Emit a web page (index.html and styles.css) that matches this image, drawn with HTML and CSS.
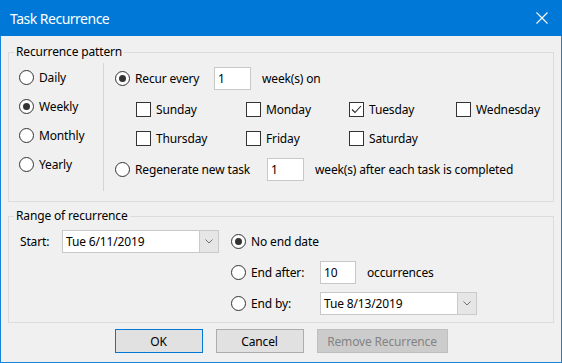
FILE: index.html
```html
<!DOCTYPE html>
<html lang="en">
<head>
    <meta charset="UTF-8">
    <meta name="viewport" content="width=device-width, initial-scale=1.0">
    <title>Task Recurrence</title>
    <link rel="stylesheet" href="styles.css">
</head>
<body>

<div class="window">
    <div class="titlebar">
        <span class="title">Task Recurrence</span>
        <svg class="close" width="12" height="12" viewBox="0 0 12 12"><path d="M0.5 0.5 L11.5 11.5 M11.5 0.5 L0.5 11.5" stroke="#fff" stroke-width="1.1" fill="none"/></svg>
    </div>

    <div class="dialog">
        <!-- pattern: frequency on the left, details on the right -->
        <fieldset class="group pattern">
            <legend>Recurrence pattern</legend>
            <div class="freq">
                <div class="opt"><span class="radio"></span>Daily</div>
                <div class="opt"><span class="radio on"></span>Weekly</div>
                <div class="opt"><span class="radio"></span>Monthly</div>
                <div class="opt"><span class="radio"></span>Yearly</div>
            </div>
            <div class="sep"></div>
            <div class="detail">
                <div class="recur-row">
                    <div class="opt lead"><span class="radio on"></span>Recur every</div>
                    <span class="field num">1</span>
                    <span class="after">week(s) on</span>
                </div>
                <div class="days">
                    <div class="opt"><span class="check"></span>Sunday</div>
                    <div class="opt"><span class="check"></span>Monday</div>
                    <div class="opt"><span class="check on"><svg width="13" height="13" viewBox="0 0 13 13"><path d="M2 6.5 L5 9.5 L11 3" stroke="#222" stroke-width="1.1" fill="none"/></svg></span>Tuesday</div>
                    <div class="opt"><span class="check"></span>Wednesday</div>
                    <div class="opt"><span class="check"></span>Thursday</div>
                    <div class="opt"><span class="check"></span>Friday</div>
                    <div class="opt"><span class="check"></span>Saturday</div>
                </div>
                <div class="regen-row">
                    <div class="opt lead"><span class="radio"></span>Regenerate new task</div>
                    <span class="field num">1</span>
                    <span class="after">week(s) after each task is completed</span>
                </div>
            </div>
        </fieldset>

        <!-- range: start date and how it ends -->
        <fieldset class="group range">
            <legend>Range of recurrence</legend>
            <div class="range-grid">
                <span class="start-label">Start:</span>
                <div class="combo">
                    <span class="combo-text">Tue 6/11/2019</span>
                    <span class="combo-btn"><svg width="8" height="5" viewBox="0 0 8 5"><path d="M0.5 0.5 L4 4 L7.5 0.5" stroke="#707070" stroke-width="1" fill="none"/></svg></span>
                </div>
                <div class="opt span2"><span class="radio on"></span>No end date</div>

                <span></span><span></span>
                <div class="opt"><span class="radio"></span>End after:</div>
                <div class="end-after">
                    <span class="field num">10</span>
                    <span class="after">occurrences</span>
                </div>

                <span></span><span></span>
                <div class="opt"><span class="radio"></span>End by:</div>
                <div class="combo">
                    <span class="combo-text">Tue 8/13/2019</span>
                    <span class="combo-btn"><svg width="8" height="5" viewBox="0 0 8 5"><path d="M0.5 0.5 L4 4 L7.5 0.5" stroke="#707070" stroke-width="1" fill="none"/></svg></span>
                </div>
            </div>
        </fieldset>

        <div class="buttons">
            <button class="btn default">OK</button>
            <button class="btn">Cancel</button>
            <button class="btn wide" disabled>Remove Recurrence</button>
        </div>
    </div>
</div>

</body>
</html>
```

FILE: styles.css
```css
body { margin: 0; font-family: "Noto Sans", "Open Sans", sans-serif; font-size: 12px; letter-spacing: -0.15px; color: #000; background: #f0f0f0; }
.window { width: 562px; height: 363px; display: flex; flex-direction: column; }
.titlebar { height: 36px; flex: none; background: #0078d7; color: #fff; display: flex; align-items: center; justify-content: space-between; padding: 0 14px 0 10px; }
.title { font-size: 14px; letter-spacing: -0.5px; }
.close { display: block; }
.dialog { flex: 1; border: 1px solid #1883d7; border-top: none; background: #f0f0f0; padding: 8px 7px 0 7px; }

/* group boxes */
.group { margin: 0; padding: 0; border: 1px solid #dcdcdc; box-sizing: border-box; display: flex; }
.group legend { margin-left: 5px; padding: 0 2px; line-height: 16px; }
.pattern { height: 158px; }
.range { height: 115px; margin-top: 6px; display: block; }

/* radio / checkbox rows */
.opt { display: flex; align-items: center; white-space: nowrap; }
.radio { width: 15px; height: 15px; box-sizing: border-box; border: 1px solid #333; border-radius: 50%; background: #fff; margin-right: 5px; display: flex; align-items: center; justify-content: center; flex: none; }
.radio.on::after { content: ""; width: 7px; height: 7px; border-radius: 50%; background: #333; }
.check { width: 15px; height: 15px; box-sizing: border-box; border: 1px solid #333; background: #fff; margin-right: 5px; display: flex; align-items: center; justify-content: center; flex: none; }
.check svg { display: block; }

.freq { width: 84px; padding: 3px 0 0 10px; }
.freq .opt { height: 29px; }
.sep { width: 1px; height: 128px; margin-top: 3px; background: #d5d5d5; }
.detail { padding: 3px 0 0 11px; }
.recur-row { height: 31px; display: flex; align-items: center; }
.recur-row .lead { width: 99px; }
.regen-row { height: 33px; display: flex; align-items: center; }
.regen-row .lead { width: 152px; }
.days { display: grid; grid-template-columns: 110px 103px 107px auto; grid-auto-rows: 29px; align-items: center; padding: 1px 0 0 21px; }
.after { margin-left: 11px; }

.field { height: 23px; box-sizing: border-box; border: 1px solid #c8c8c8; background: #fff; display: flex; align-items: center; padding-left: 3px; }
.field.num { width: 37px; }

.range-grid { display: grid; grid-template-columns: 42px 169px 89px auto; grid-auto-rows: 31px; align-items: center; padding: 2px 0 0 11px; }
.span2 { grid-column: span 2; }
.combo { width: 157px; height: 23px; display: flex; }
.combo-text { flex: 1; box-sizing: border-box; border: 1px solid #c8c8c8; border-right: none; background: #fff; display: flex; align-items: center; padding-left: 3px; }
.combo-btn { width: 20px; box-sizing: border-box; border: 1px solid #cacaca; background: #e6e6e6; display: flex; align-items: center; justify-content: center; }
.end-after { display: flex; align-items: center; }
.end-after .field { width: 36px; }

/* dialog buttons */
.buttons { display: flex; justify-content: center; gap: 13px; margin-top: 6px; }
.btn { width: 88px; height: 24px; box-sizing: border-box; border: 1px solid #adadad; background: #e1e1e1; font-family: inherit; font-size: 12px; letter-spacing: inherit; color: #000; padding: 0; }
.btn.default { border-color: #0078d7; }
.btn.wide { width: 131px; }
.btn:disabled { background: #cccccc; border-color: #bfbfbf; color: #838383; }
```
